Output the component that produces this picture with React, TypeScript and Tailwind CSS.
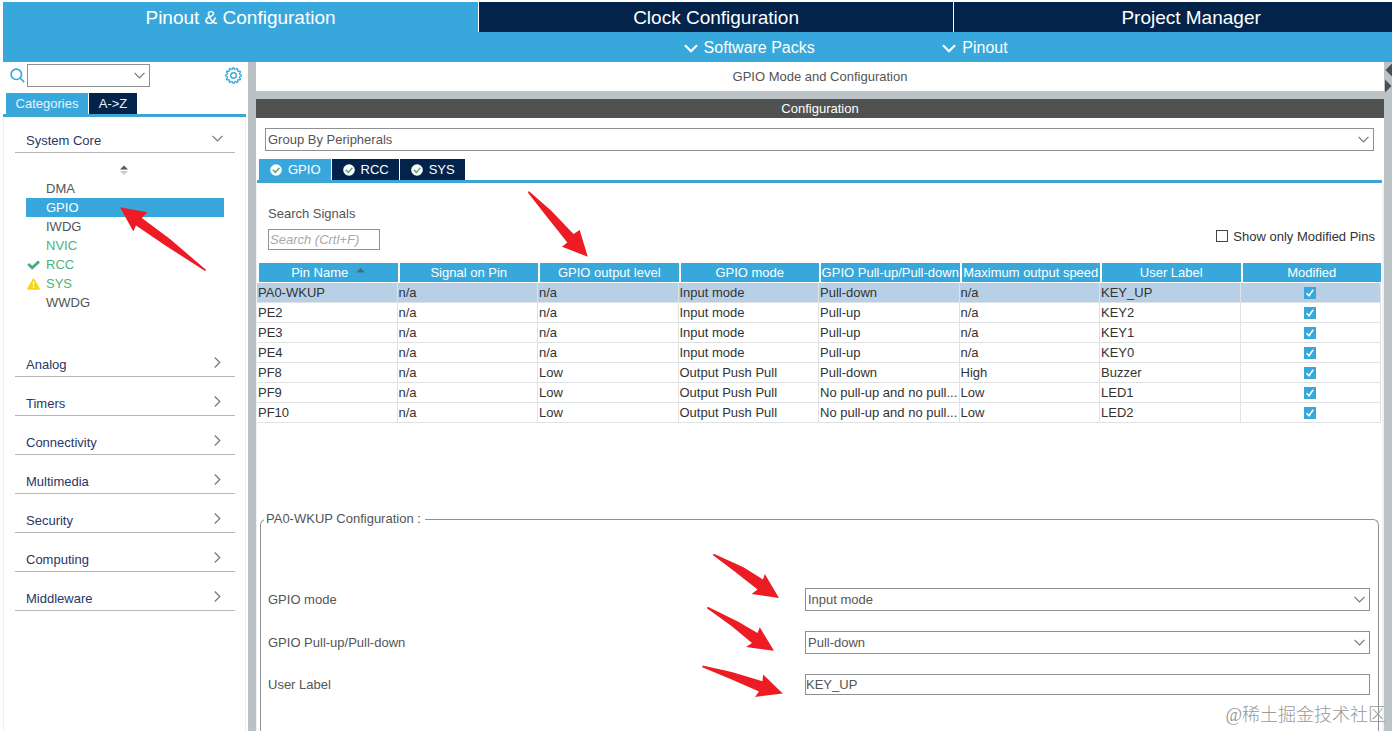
import React, { useState } from "react";
import clsx from "clsx";

const categories = [
  "Analog",
  "Timers",
  "Connectivity",
  "Multimedia",
  "Security",
  "Computing",
  "Middleware",
];

const coreItems = [
  { name: "DMA" },
  { name: "GPIO" },
  { name: "IWDG" },
  { name: "NVIC", active: true },
  { name: "RCC", active: true, icon: "check" },
  { name: "SYS", active: true, icon: "warning" },
  { name: "WWDG" },
];

const columns = [
  "Pin Name",
  "Signal on Pin",
  "GPIO output level",
  "GPIO mode",
  "GPIO Pull-up/Pull-down",
  "Maximum output speed",
  "User Label",
  "Modified",
];

const NO_PULL = "No pull-up and no pull...";

const pins = [
  ["PA0-WKUP", "n/a", "n/a", "Input mode", "Pull-down", "n/a", "KEY_UP"],
  ["PE2", "n/a", "n/a", "Input mode", "Pull-up", "n/a", "KEY2"],
  ["PE3", "n/a", "n/a", "Input mode", "Pull-up", "n/a", "KEY1"],
  ["PE4", "n/a", "n/a", "Input mode", "Pull-up", "n/a", "KEY0"],
  ["PF8", "n/a", "Low", "Output Push Pull", "Pull-down", "High", "Buzzer"],
  ["PF9", "n/a", "Low", "Output Push Pull", NO_PULL, "Low", "LED1"],
  ["PF10", "n/a", "Low", "Output Push Pull", NO_PULL, "Low", "LED2"],
];

// twelve-tooth outline, four points per tooth
const gearPoints = Array.from({ length: 48 }, (_, i) => {
  const r = i % 4 === 0 || i % 4 === 1 ? 7.4 : 5.9;
  const a = ((i - 0.5) / 48) * Math.PI * 2;
  return `${(8 + r * Math.cos(a)).toFixed(2)},${(8 + r * Math.sin(a)).toFixed(2)}`;
}).join(" ");

function GearIcon() {
  return (
    <svg width="17" height="17" viewBox="0 0 16 16" fill="none" stroke="#38a8dc" aria-hidden="true">
      <polygon points={gearPoints} strokeWidth="1.2" strokeLinejoin="round" />
      <circle cx="8" cy="8" r="2.6" strokeWidth="1.3" />
    </svg>
  );
}

function SearchIcon() {
  return (
    <svg width="15" height="15" viewBox="0 0 15 15" fill="none" stroke="#38a8dc" strokeWidth="1.7" aria-hidden="true">
      <circle cx="6.3" cy="6.3" r="5.2" />
      <path d="M10 10l4.2 4.2" />
    </svg>
  );
}

function ChevronDown({ className }: { className?: string }) {
  return (
    <svg width="11" height="7" viewBox="0 0 11 7" fill="none" stroke="#777" strokeWidth="1.2" className={className} aria-hidden="true">
      <path d="M.5 .8l5 5 5-5" />
    </svg>
  );
}

function ChevronRight() {
  return (
    <svg width="7" height="11" viewBox="0 0 7 11" fill="none" stroke="#777" strokeWidth="1.2" aria-hidden="true">
      <path d="M.8 .5l5 5-5 5" />
    </svg>
  );
}

function MenuChevron() {
  return (
    <svg width="14" height="9" viewBox="0 0 14 9" fill="none" stroke="#fff" strokeWidth="2.2" aria-hidden="true">
      <path d="M1 1.2l6 6 6-6" />
    </svg>
  );
}

function StatusIcon() {
  return (
    <svg width="12" height="12" viewBox="0 0 12 12" fill="none" aria-hidden="true">
      <circle cx="6" cy="6" r="5.8" fill="#fff" />
      <path d="M2.8 5.8l2.6 2.6 4-4.6" stroke="#4bb27c" strokeWidth="1.5" />
    </svg>
  );
}

function ItemIcon({ kind }: { kind?: string }) {
  if (kind === "check") {
    return (
      <svg width="13" height="10" viewBox="0 0 13 10" fill="none" stroke="#43ad7c" strokeWidth="2.8" aria-hidden="true">
        <path d="M1.2 4l4 3.8L12 1.4" />
      </svg>
    );
  }
  if (kind === "warning") {
    return (
      <svg width="13" height="12" viewBox="0 0 13 12" aria-hidden="true">
        <path d="M5.7.9q.8-1.2 1.6 0l5.5 9.6q.4 1.3-.9 1.3H1.1q-1.3 0-.9-1.3z" fill="#f7d417" />
        <path d="M6.5 3.6v4M6.5 8.6v1.5" stroke="#fff" strokeWidth="1.3" />
      </svg>
    );
  }
  return null;
}

type SelectProps = {
  id: string;
  label?: string;
  options: string[];
  className?: string;
};

function Select({ id, label, options, className }: SelectProps) {
  return (
    <div className={clsx("relative", className)}>
      <select
        id={id}
        aria-label={label}
        className="block h-[23px] w-full appearance-none border border-[#8e9194] bg-white pl-0.5 text-[13px] text-[#555]"
      >
        {options.map((option) => (
          <option key={option}>{option}</option>
        ))}
      </select>
      <ChevronDown className="pointer-events-none absolute top-2 right-[5px]" />
    </div>
  );
}

type CheckboxProps = {
  checked: boolean;
  onChange: () => void;
  id?: string;
  label?: string;
};

function Checkbox({ checked, onChange, id, label }: CheckboxProps) {
  return (
    <span className="relative inline-block h-3 w-3">
      <input
        id={id}
        type="checkbox"
        aria-label={label}
        checked={checked}
        onChange={onChange}
        className="block h-3 w-3 appearance-none border border-[#444] bg-white checked:border-[#38a8dc] checked:bg-[#38a8dc]"
      />
      {checked && (
        <svg viewBox="0 0 12 12" fill="none" stroke="#fff" strokeWidth="1.5" className="pointer-events-none absolute inset-0" aria-hidden="true">
          <path d="M2.6 6.4l2.4 2.4 4.2-6" />
        </svg>
      )}
    </span>
  );
}

function Header() {
  return (
    <header className="overflow-hidden pt-0.5 pl-[3px]">
      <div className="bg-[#38a8dc]">
        <nav className="grid w-[102.6%] grid-cols-3 text-[19px] text-white">
          <button type="button" className="h-[30px] pt-0.5">
            Pinout &amp; Configuration
          </button>
          <button type="button" className="h-[30px] border-l border-white bg-[#03234b] pt-0.5">
            Clock Configuration
          </button>
          <button type="button" className="h-[30px] border-l border-white bg-[#03234b] pt-0.5">
            Project Manager
          </button>
        </nav>
        <div className="flex h-[30px] items-center gap-[18%] pt-0.5 pl-[49%] text-base text-white">
          <button type="button" className="flex items-center gap-1.5">
            <MenuChevron />
            Software Packs
          </button>
          <button type="button" className="flex items-center gap-1.5">
            <MenuChevron />
            Pinout
          </button>
        </div>
      </div>
    </header>
  );
}

function Sidebar() {
  const [selected, setSelected] = useState("GPIO");

  return (
    <aside className="flex w-[248px] shrink-0 flex-col pl-[3px]">
      <div className="flex h-[31px] items-start pt-0.5 pr-1.5 pl-[7px]">
        <span className="pt-1">
          <SearchIcon />
        </span>
        <Select id="search" label="Search" options={[""]} className="ml-0.5 w-[123px]" />
        <button type="button" aria-label="Settings" className="ml-auto pt-[3px]">
          <GearIcon />
        </button>
      </div>
      <div className="mr-0.5 flex gap-px border-b-3 border-[#3ea3d5] pl-[3px] text-[13px] text-[#e4f3ff]">
        <button type="button" className="h-[21px] w-[82px] bg-[#38a8dc]">
          Categories
        </button>
        <button type="button" className="h-[21px] w-12 bg-[#03234b]">
          A-&gt;Z
        </button>
      </div>
      <div className="mr-0.5 grow border-x border-[#eceef0] pr-2.5 pl-[11px] text-[13px]">
        <button
          type="button"
          className="flex h-9 w-full items-end justify-between border-b border-[#b4b6b8] pr-3 pb-0.5 pl-[11px] text-[#2b3566]"
        >
          System Core
          <ChevronDown className="mb-2" />
        </button>
        <div className="flex h-[185px] flex-col pt-3 pl-[11px]">
          <svg width="8" height="10" viewBox="0 0 8 10" className="mb-1 ml-[94px] shrink-0" aria-hidden="true">
            <path d="M0 4.4l4-4 4 4z" fill="#555" />
            <path d="M0 6l4 4 4-4z" fill="#ccc" />
          </svg>
          <ul className="mr-[11px]">
            {coreItems.map((item) => (
              <li key={item.name}>
                <button
                  type="button"
                  onClick={() => setSelected(item.name)}
                  className={clsx(
                    "flex h-[19px] w-full items-center pl-px",
                    selected === item.name
                      ? "bg-[#38a8dc] text-white"
                      : item.active
                        ? "text-[#4bb27c]"
                        : "text-[#555]",
                  )}
                >
                  <span className="flex w-[19px]">
                    <ItemIcon kind={item.icon} />
                  </span>
                  {item.name}
                </button>
              </li>
            ))}
          </ul>
        </div>
        {categories.map((category) => (
          <button
            key={category}
            type="button"
            className="flex h-[39px] w-full items-end justify-between border-b border-[#b4b6b8] pr-3.5 pb-0.5 pl-[11px] text-[#2b3566]"
          >
            {category}
            <span className="pb-1.5">
              <ChevronRight />
            </span>
          </button>
        ))}
      </div>
    </aside>
  );
}

function PinTable() {
  const [modified, setModified] = useState(pins.map(() => true));

  const toggle = (row: number) =>
    setModified((prev) => prev.map((value, i) => (i === row ? !value : value)));

  return (
    <table className="w-full table-fixed border-separate border-spacing-0 text-[13px] leading-[19px]">
      <thead>
        <tr>
          {columns.map((column, i) => (
            <th
              key={column}
              className="h-5 overflow-hidden border-b border-l-2 border-white bg-[#38a8dc] p-0 font-normal whitespace-nowrap text-white"
            >
              {column}
              {i === 0 && (
                <svg width="9" height="5" viewBox="0 0 9 5" className="mb-1.5 ml-2 inline-block" aria-hidden="true">
                  <path d="M0 4.5L4.5 0 9 4.5z" fill="#4d6a7c" />
                </svg>
              )}
            </th>
          ))}
        </tr>
      </thead>
      <tbody>
        {pins.map((pin, row) => (
          <tr key={pin[0]} className={clsx("text-[#333]", row === 0 && "bg-[#b8d0e6]")}>
            {pin.map((value, i) => (
              <td key={i} className="h-5 overflow-hidden border-r border-b border-[#e0e2e4] py-0 pr-0 pl-px whitespace-nowrap">
                {value}
              </td>
            ))}
            <td className="h-5 border-r border-b border-[#e0e2e4] p-0">
              <span className="flex justify-center">
                <Checkbox
                  label={`${pin[0]} modified`}
                  checked={modified[row]}
                  onChange={() => toggle(row)}
                />
              </span>
            </td>
          </tr>
        ))}
      </tbody>
    </table>
  );
}

function PinForm() {
  const [userLabel, setUserLabel] = useState("KEY_UP");

  return (
    <fieldset className="mr-0.5 ml-[3px] grow rounded-t-md border border-b-0 border-[#8e9194] pr-2 pl-[7px] text-[13px] text-[#555]">
      <legend className="-ml-1 pr-1 pl-0.5 leading-5">PA0-WKUP Configuration :</legend>
      <div className="grid grid-cols-[537fr_565fr] items-center gap-y-5 pt-[59px]">
        <label htmlFor="mode">GPIO mode</label>
        <Select id="mode" options={["Input mode", "Output Push Pull"]} />
        <label htmlFor="pull">GPIO Pull-up/Pull-down</label>
        <Select id="pull" options={["Pull-down", "Pull-up", NO_PULL]} />
        <label htmlFor="label">User Label</label>
        <input
          id="label"
          type="text"
          value={userLabel}
          onChange={(e) => setUserLabel(e.target.value)}
          className="h-[21px] border border-[#8e9194] bg-white text-[#555]"
        />
      </div>
    </fieldset>
  );
}

function MainPanel() {
  const [tab, setTab] = useState("GPIO");
  const [onlyModified, setOnlyModified] = useState(false);

  return (
    <main className="flex min-w-0 grow flex-col">
      <h1 className="mb-2 h-[29px] bg-white text-center text-[13px] leading-[29px] text-[#555]">
        GPIO Mode and Configuration
      </h1>
      <h2 className="h-[19px] bg-[#4f5251] text-center text-[13px] leading-[19px] text-white">
        Configuration
      </h2>
      <div className="flex grow flex-col bg-white pt-2.5">
        <Select id="group" label="Group" options={["Group By Peripherals"]} className="mr-2.5 ml-[9px]" />
        <div className="mt-2 mr-0.5 ml-px flex gap-px border-b-3 border-[#3ea3d5] pl-0.5 text-[13px] text-white">
          {["GPIO", "RCC", "SYS"].map((name) => (
            <button
              key={name}
              type="button"
              onClick={() => setTab(name)}
              className={clsx(
                "flex h-[21px] items-center gap-1.5 pr-2.5 pl-[11px]",
                tab === name ? "bg-[#38a8dc]" : "bg-[#03234b]",
              )}
            >
              <StatusIcon />
              {name}
            </button>
          ))}
        </div>
        <div className="flex grow flex-col border-r-2 border-l border-[#eef2f4] pt-[21px] pr-px">
          <div className="flex items-end justify-between pr-1.5 pl-[11px] text-[13px] text-[#555]">
            <div className="flex flex-col gap-[5px]">
              <label htmlFor="signals" className="leading-5">
                Search Signals
              </label>
              <input
                id="signals"
                type="text"
                placeholder="Search (Crtl+F)"
                className="h-[21px] w-28 border border-[#8e9194] px-px placeholder:text-[#a8a8a8] placeholder:italic"
              />
            </div>
            <span className="flex items-center gap-[5px] pb-1 text-[#333]">
              <Checkbox
                id="only-modified"
                checked={onlyModified}
                onChange={() => setOnlyModified((prev) => !prev)}
              />
              <label htmlFor="only-modified">Show only Modified Pins</label>
            </span>
          </div>
          <div className="mt-[13px] mb-[86px]">
            <PinTable />
          </div>
          <PinForm />
        </div>
      </div>
    </main>
  );
}

// red callouts drawn on top of the window
function Arrows() {
  return (
    <svg className="pointer-events-none absolute inset-0 h-full w-full" fill="#ed1c24" aria-hidden="true">
      <polygon points="120,207.3 147.3,212.3 141.9,218 170,239 206.2,270 205,271 165,245.2 136,225.5 133.3,231.5" />
      <polygon points="528.8,191 551,210.5 573.5,234 579.7,230 587.8,256.8 562,246.7 567.3,242.5 547,217 528,192.7" />
      <polygon points="713.8,553.7 743.5,567.3 763,579.5 764.8,574 779,598 751.5,594 757.5,589.4 735,571.7 712.8,555" />
      <polygon points="707.9,606.7 738.3,621.7 757.5,633 759.8,627.3 774,650.8 746.2,647 752,643 731.5,626 706.9,608.2" />
      <polygon points="702.7,665.6 731.7,672 762.5,681.2 763.2,674.5 782.7,693.4 755,697 759,691.6 731.7,679.6 702.2,667.3" />
    </svg>
  );
}

export default function App() {
  return (
    <div className="relative flex min-h-screen flex-col overflow-hidden bg-white font-['Liberation_Sans',Arial,sans-serif]">
      <Header />
      <div className="flex grow">
        <Sidebar />
        <div className="w-2 shrink-0 bg-[#bbc2c6]" />
        <div className="flex min-w-0 grow bg-[#bbc3c6]">
          <MainPanel />
          <svg width="8" height="31" viewBox="0 0 8 31" className="shrink-0" aria-hidden="true">
            <path d="M8 1.5L1.5 8 8 14.5zM1 17.5v13l6.5-6.5z" fill="#4b4f55" />
          </svg>
        </div>
      </div>
      <Arrows />
      <p className="pointer-events-none absolute right-1.5 bottom-0 font-['Liberation_Serif','Noto_Sans_CJK_SC',serif] text-lg leading-8 font-light text-[#999]">
        @稀土掘金技术社区
      </p>
    </div>
  );
}
